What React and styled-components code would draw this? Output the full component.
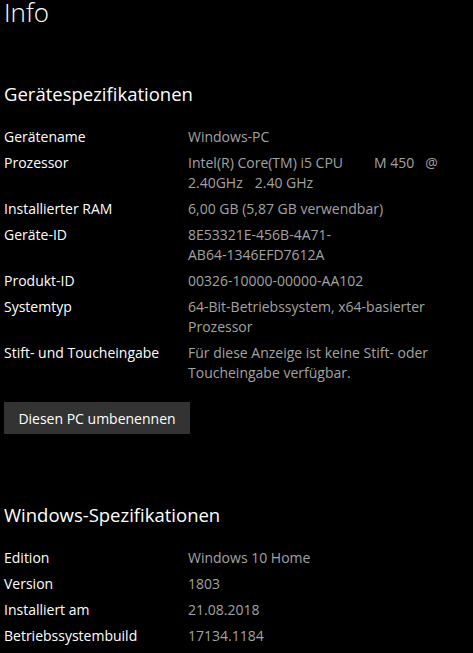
import React from "react";
import styled, { createGlobalStyle } from "styled-components";

const Global = createGlobalStyle`
  html, body { margin: 0; padding: 0; background: #000; }
  body { font-family: "Open Sans", "Noto Sans", sans-serif; color: #fff; }
`;

const Page = styled.div`
  width: 473px;
  height: 653px;
  overflow: hidden;
  background: #000;
  padding-left: 4px;
  box-sizing: border-box;
`;

const Title = styled.h1`
  margin: 0;
  font-weight: 300;
  font-size: 26px;
  line-height: 24px;
  color: #fff;
`;

const SectionTitle = styled.h2`
  margin: ${(p) => p.$top}px 0 0 0;
  font-weight: 400;
  font-size: 18.5px;
  line-height: 26px;
  color: #fff;
`;

const Specs = styled.div`
  display: grid;
  grid-template-columns: 184px 1fr;
  row-gap: 6px;
  margin-top: ${(p) => p.$top}px;
  font-size: 14px;
  line-height: 20px;
`;

const Label = styled.div`
  color: #fff;
`;

const Value = styled.div`
  color: #a3a3a3;
  white-space: pre;
`;

const Gap = styled.span`
  display: inline-block;
  width: ${(p) => p.$w}px;
`;

const RenameButton = styled.button`
  margin-top: 19px;
  display: block;
  width: 186px;
  height: 32px;
  padding: 0;
  border: none;
  background: #333;
  color: #fff;
  font-family: inherit;
  font-size: 14px;
  text-align: center;
`;

const device = [
  ["Gerätename", "Windows-PC"],
  [
    "Prozessor",
    <>
      Intel(R) Core(TM) i5 CPU<Gap $w={31} />M 450<Gap $w={11} />@
      {"\n"}2.40GHz<Gap $w={12} />2.40 GHz
    </>,
  ],
  ["Installierter RAM", "6,00 GB (5,87 GB verwendbar)"],
  ["Geräte-ID", "8E53321E-456B-4A71-\nAB64-1346EFD7612A"],
  ["Produkt-ID", "00326-10000-00000-AA102"],
  ["Systemtyp", "64-Bit-Betriebssystem, x64-basierter\nProzessor"],
  ["Stift- und Toucheingabe", "Für diese Anzeige ist keine Stift- oder\nToucheingabe verfügbar."],
];

const windows = [
  ["Edition", "Windows 10 Home"],
  ["Version", "1803"],
  ["Installiert am", "21.08.2018"],
  ["Betriebssystembuild", "17134.1184"],
];

function SpecList({ rows, top }) {
  return (
    <Specs $top={top}>
      {rows.map(([l, v]) => (
        <React.Fragment key={l}>
          <Label>{l}</Label>
          <Value>{v}</Value>
        </React.Fragment>
      ))}
    </Specs>
  );
}

export default function App() {
  return (
    <Page>
      <Global />
      <Title>Info</Title>
      <SectionTitle $top={57}>Gerätespezifikationen</SectionTitle>
      <SpecList rows={device} top={20} />
      <RenameButton>Diesen PC umbenennen</RenameButton>
      <SectionTitle $top={68}>Windows-Spezifikationen</SectionTitle>
      <SpecList rows={windows} top={20} />
    </Page>
  );
}
